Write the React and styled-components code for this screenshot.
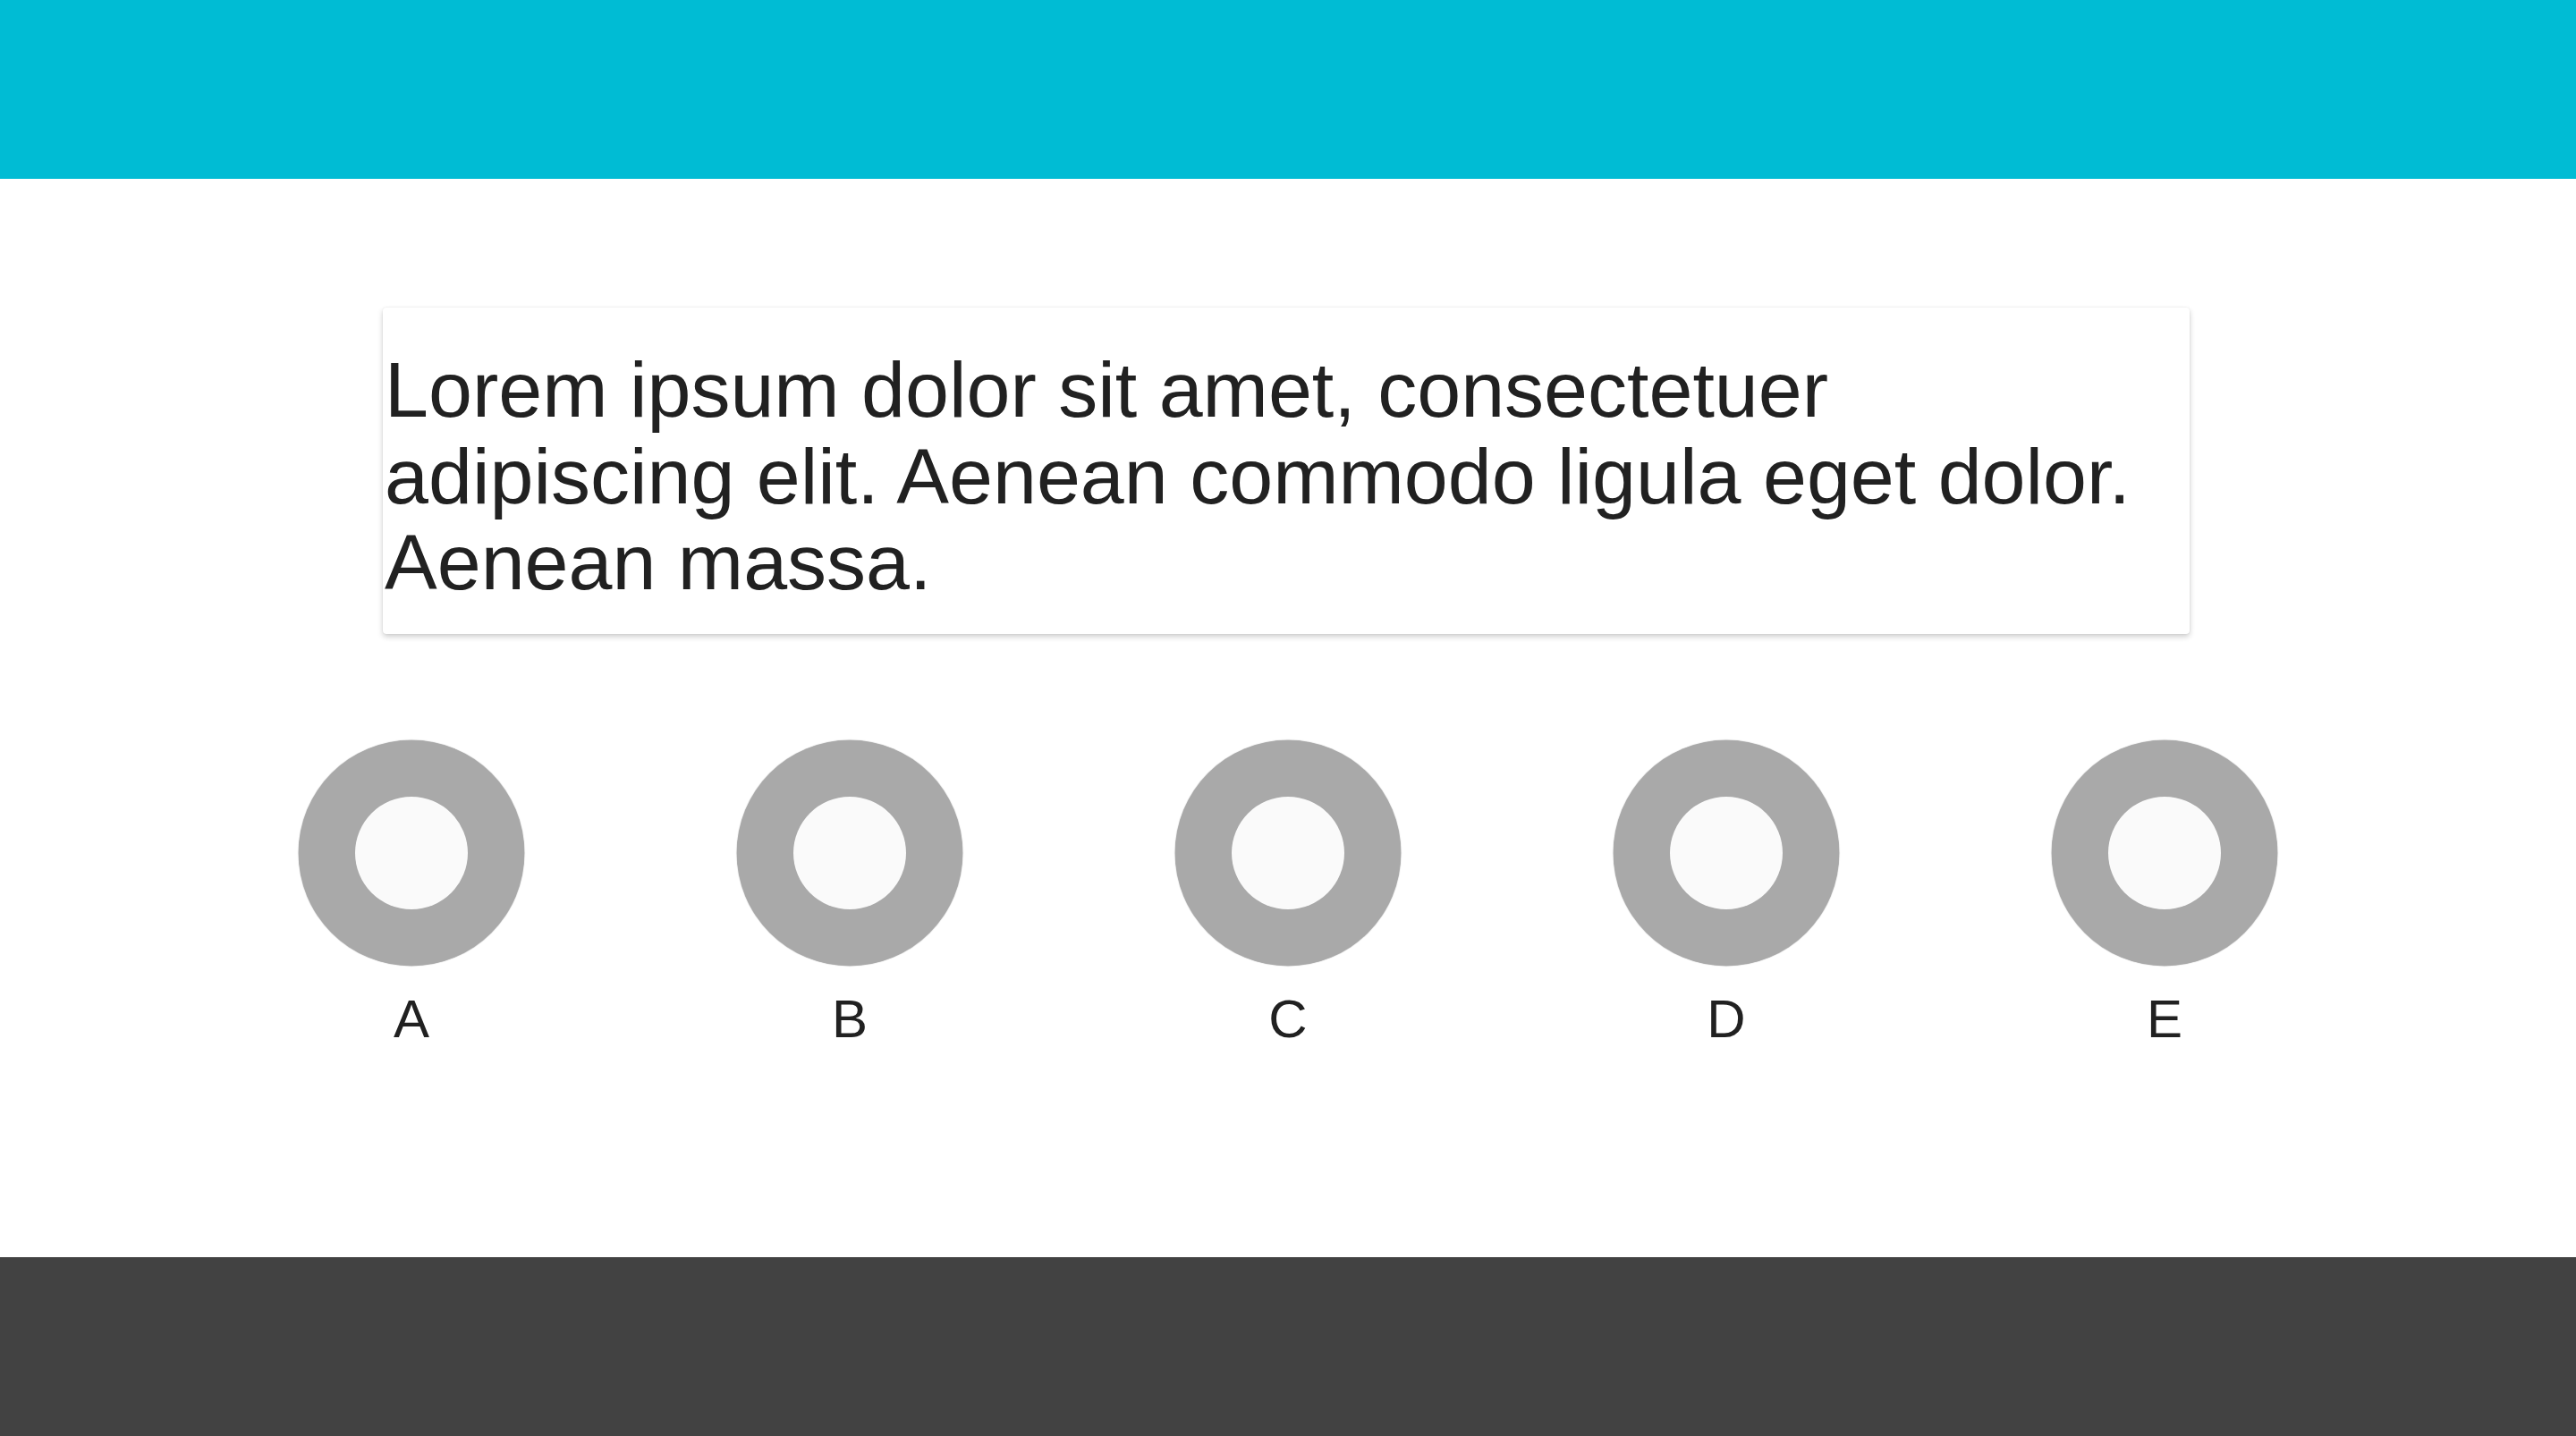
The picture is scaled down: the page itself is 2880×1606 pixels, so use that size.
import styled, { createGlobalStyle } from "styled-components";

const GlobalStyle = createGlobalStyle`
    html, body {
        margin: 0;
        padding: 0;
        background: #ffffff;
        font-family: "Liberation Sans", Arial, sans-serif;
    }
`;

const Page = styled.div`
    display: flex;
    flex-direction: column;
    min-height: 1606px;
`;

const Header = styled.header`
    height: 200px;
    background: #00bcd4;
`;

const Main = styled.main`
    flex: 1;
    display: flex;
    flex-direction: column;
    align-items: center;
    padding-top: 144px;
`;

const Card = styled.div`
    width: 2020px;
    box-sizing: border-box;
    margin-right: 4px;
    padding: 44px 8px 31px 2px;
    background: #ffffff;
    border-radius: 4px;
    box-shadow: 0 3px 6px rgba(0, 0, 0, 0.2), 0 0 2px rgba(0, 0, 0, 0.08);
`;

const Text = styled.p`
    margin: 0;
    font-size: 88px;
    line-height: 96.5px;
    color: #212121;
`;

const Options = styled.div`
    display: grid;
    grid-template-columns: repeat(5, 490px);
    margin-top: 119px;
`;

const Option = styled.div`
    display: flex;
    flex-direction: column;
    align-items: center;
`;

const Ring = styled.div`
    width: 252px;
    height: 252px;
    border-radius: 50%;
    background: #a9a9a9;
    box-shadow: 0 0 1px 0.5px rgba(0, 0, 0, 0.35);
    display: flex;
    align-items: center;
    justify-content: center;
`;

const Dot = styled.div`
    width: 126px;
    height: 126px;
    border-radius: 50%;
    background: #fafafa;
`;

const Label = styled.span`
    margin-top: 25px;
    font-size: 60px;
    color: #212121;
`;

const Footer = styled.footer`
    height: 200px;
    background: #424242;
`;

const letters = ["A", "B", "C", "D", "E"];

export default function App() {
    return (
        <Page>
            <GlobalStyle />
            <Header />
            <Main>
                <Card>
                    <Text>
                        Lorem ipsum dolor sit amet, consectetuer adipiscing elit. Aenean commodo ligula eget
                        dolor. Aenean massa.
                    </Text>
                </Card>
                <Options>
                    {letters.map((l) => (
                        <Option key={l}>
                            <Ring>
                                <Dot />
                            </Ring>
                            <Label>{l}</Label>
                        </Option>
                    ))}
                </Options>
            </Main>
            <Footer />
        </Page>
    );
}
